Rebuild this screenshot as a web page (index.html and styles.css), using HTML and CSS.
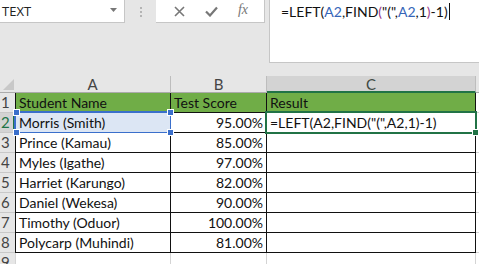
FILE: index.html
```html
<!DOCTYPE html>
<html lang="en">
<head>
    <meta charset="UTF-8">
    <title>Excel LEFT FIND</title>
    <link rel="stylesheet" href="styles.css">
</head>
<body>
    <!-- Formula bar -->
    <div class="toolbar">
        <div class="namebox">
            <span>TEXT</span>
            <svg class="caret" width="7" height="4" viewBox="0 0 7 4"><path d="M0 0h7L3.5 4z" fill="#777"/></svg>
        </div>
        <div class="grip"><i></i><i></i><i></i></div>
        <div class="buttons">
            <svg width="11" height="11" viewBox="0 0 11 11"><path d="M1 1l9 9M10 1l-9 9" stroke="#777" stroke-width="1.6" fill="none"/></svg>
            <svg width="13" height="11" viewBox="0 0 13 11"><path d="M1 5.5l4 4L12 1.5" stroke="#777" stroke-width="2.2" fill="none"/></svg>
            <span class="fx">fx</span>
        </div>
        <div class="formula">
            =LEFT(<span class="ref">A2</span>,FIND<span class="p2">(</span>"(",<span class="ref">A2</span>,1<span class="p2">)</span>-1)<span class="cursor"></span>
        </div>
    </div>

    <!-- Sheet -->
    <div class="sheet">
        <div class="corner"><svg width="11" height="11" viewBox="0 0 11 11"><path d="M11 0v11H0z" fill="#c8c8c8"/></svg></div>
        <div class="hd">A</div>
        <div class="hd">B</div>
        <div class="hd sel">C</div>
        <div class="hd last"></div>

        <div class="rh">1</div>
        <div class="c b green">Student Name</div>
        <div class="c b green">Test Score</div>
        <div class="c b green">Result</div>
        <div class="c"></div>

        <div class="rh active-row">2</div>
        <div class="c b refcell">Morris (Smith)<i class="h tl"></i><i class="h tr"></i><i class="h bl"></i><i class="h br"></i></div>
        <div class="c b num">95.00%</div>
        <div class="c b active">=LEFT(A2,FIND("(",A2,1)-1)</div>
        <div class="c"></div>

        <div class="rh">3</div>
        <div class="c b">Prince (Kamau)</div>
        <div class="c b num">85.00%</div>
        <div class="c b"></div>
        <div class="c"></div>

        <div class="rh">4</div>
        <div class="c b">Myles (Igathe)</div>
        <div class="c b num">97.00%</div>
        <div class="c b"></div>
        <div class="c"></div>

        <div class="rh">5</div>
        <div class="c b">Harriet (Karungo)</div>
        <div class="c b num">82.00%</div>
        <div class="c b"></div>
        <div class="c"></div>

        <div class="rh">6</div>
        <div class="c b">Daniel (Wekesa)</div>
        <div class="c b num">90.00%</div>
        <div class="c b"></div>
        <div class="c"></div>

        <div class="rh">7</div>
        <div class="c b">Timothy (Oduor)</div>
        <div class="c b num">100.00%</div>
        <div class="c b"></div>
        <div class="c"></div>

        <div class="rh">8</div>
        <div class="c b">Polycarp (Muhindi)</div>
        <div class="c b num">81.00%</div>
        <div class="c b"></div>
        <div class="c"></div>

        <div class="rh">9</div>
        <div class="c"></div>
        <div class="c"></div>
        <div class="c"></div>
        <div class="c"></div>
    </div>
</body>
</html>
```

FILE: styles.css
```css
body {
    margin: 0;
    background-color: #e6e6e6;
    font-family: Lato, "Liberation Sans", sans-serif;
    overflow: hidden;
}
/* Formula bar */
.toolbar {
    display: flex;
    align-items: flex-start;
    height: 63px;
}
.namebox {
    width: 125px;
    height: 23px;
    box-sizing: border-box;
    background: white;
    border-right: 1px solid #c6c6c6;
    border-bottom: 1px solid #c6c6c6;
    display: flex;
    align-items: center;
    justify-content: space-between;
    padding: 0 7px 0 2px;
    font-family: "Open Sans", sans-serif;
    font-size: 13px;
    color: #222;
}
.caret {
    margin-top: -3px;
}
.grip {
    width: 31px;
    height: 23px;
    display: flex;
    flex-direction: column;
    align-items: center;
    justify-content: center;
    gap: 2px;
}
.grip i {
    width: 2px;
    height: 2px;
    background: #b4b4b4;
}
.buttons {
    width: 109px;
    height: 23px;
    box-sizing: border-box;
    background: white;
    border-right: 1px solid #c6c6c6;
    border-bottom: 1px solid #c6c6c6;
    display: flex;
    align-items: center;
    justify-content: space-around;
    padding: 0 6px 0 8px;
}
.fx {
    font-family: "Liberation Serif", serif;
    font-style: italic;
    font-size: 14px;
    color: #777;
    margin-top: -2px;
}
.formula {
    flex: 1;
    height: 63px;
    margin-left: 4px;
    box-sizing: border-box;
    background: white;
    border-left: 1px solid #c6c6c6;
    border-bottom: 1px solid #c6c6c6;
    padding: 3px 0 0 11px;
    font-size: 14px;
    color: #111;
    white-space: nowrap;
}
.formula .ref {
    color: #3565b8;
}
.formula .p2 {
    color: #9b3a8a;
}
.cursor {
    display: inline-block;
    width: 1px;
    height: 17px;
    background: #111;
    vertical-align: -3px;
    margin-left: 1px;
}
/* Sheet grid */
.sheet {
    margin-top: 13px;
    display: grid;
    grid-template-columns: 15px 156px 96px 209px 1fr;
    grid-template-rows: 17px repeat(9, 20px);
    font-size: 14px;
}
.corner {
    border-bottom: 1px solid #ababab;
    display: flex;
    align-items: flex-end;
    justify-content: flex-end;
    padding: 0 1px 2px 0;
}
.hd {
    box-sizing: border-box;
    border-right: 1px solid #bdbdbd;
    border-bottom: 1px solid #ababab;
    text-align: center;
    color: #444;
    line-height: 16px;
    font-size: 15px;
}
.hd.sel {
    background: #d3d3d3;
    color: #3f4a44;
    border-bottom: 2px solid #217346;
}
.hd.last {
    border-right: none;
}
.rh {
    color: #444;
    font-size: 15px;
    line-height: 19px;
    padding-left: 1px;
    border-bottom: 1px solid #c8c8c8;
}
.rh.active-row {
    background: #d3d3d3;
    color: #217346;
    box-shadow: inset -2px 0 #217346;
}
.c {
    position: relative;
    box-sizing: border-box;
    background: white;
    border-right: 1px solid #d4d4d4;
    border-bottom: 1px solid #d4d4d4;
    padding: 0 3px;
    line-height: 19px;
    white-space: nowrap;
    color: #111;
}
.sheet > .c:nth-child(5n+2) {
    border-left: 1px solid #d4d4d4;
}
.c.b {
    border-right-color: #111;
    border-bottom-color: #111;
}
.sheet > .c.b:nth-child(5n+2) {
    border-left-color: #111;
}
.c.green {
    background: #70ad47;
}
.c.num {
    text-align: right;
}
/* Selection overlays */
.refcell {
    background: #dce6f4;
}
.refcell::after {
    content: "";
    position: absolute;
    inset: -2px -2px -2px -2px;
    border: 2px solid #3a6fcb;
}
.h {
    position: absolute;
    width: 5px;
    height: 5px;
    background: #3a6fcb;
    border: 1px solid white;
    z-index: 2;
}
.h.tl { left: -3px; top: -4px; }
.h.tr { right: -4px; top: -4px; }
.h.bl { left: -3px; bottom: -4px; }
.h.br { right: -4px; bottom: -4px; }
.active {
    z-index: 1;
}
.active::after {
    content: "";
    position: absolute;
    inset: -2px -2px -2px -2px;
    border: 2px solid #217346;
}
.active::before {
    content: "";
    position: absolute;
    right: -4px;
    bottom: -4px;
    width: 5px;
    height: 5px;
    background: #217346;
    border: 1px solid white;
    z-index: 2;
}
```
